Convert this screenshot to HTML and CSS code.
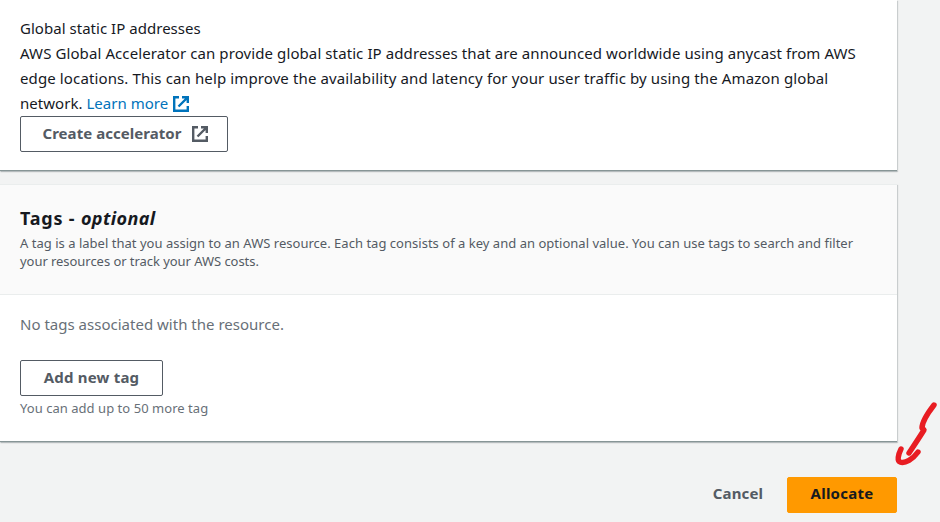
FILE: index.html
```
<!DOCTYPE html>
<html lang="en">
<head>
<meta charset="utf-8">
<title>Allocate Elastic IP address</title>
<link rel="stylesheet" href="styles.css">
</head>
<body>
<main class="page">
  <section class="card accelerator">
    <h3 class="label">Global static IP addresses</h3>
    <p class="copy">
      <span class="line line-a">AWS Global Accelerator can provide global static IP addresses that are announced worldwide using anycast from AWS</span>
      <span class="line line-b">edge locations. This can help improve the availability and latency for your user traffic by using the Amazon global</span>
      <span class="line line-c">network. <a class="link">Learn more<svg class="icon link-icon" viewBox="0 0 16 16"><path d="M6 1.200H1.200v13.600h13.600V10M9 1.200h5.800V7M14.500 1.500 5.500 10.500"/></svg></a></span>
    </p>
    <button class="button create"><span>Create accelerator</span><svg class="icon" viewBox="0 0 16 16"><path d="M6 1.200H1.200v13.600h13.600V10M9 1.200h5.800V7M14.500 1.500 5.500 10.500"/></svg></button>
  </section>
  <section class="card tags">
    <header class="tags-header">
      <h2 class="title"><span class="title-main">Tags - </span><i>optional</i></h2>
      <p class="description">
        <span class="line desc-a">A tag is a label that you assign to an AWS resource. Each tag consists of a key and an optional value. You can use tags to search and filter</span>
        <span class="line desc-b">your resources or track your AWS costs.</span>
      </p>
    </header>
    <div class="tags-body">
      <p class="empty">No tags associated with the resource.</p>
      <button class="button add">Add new tag</button>
      <p class="hint">You can add up to 50 more tag</p>
    </div>
  </section>
  <footer class="actions">
    <button class="button cancel">Cancel</button>
    <button class="button primary">Allocate</button>
  </footer>
</main>
<svg class="arrow" viewBox="0 0 50 72"><path d="M44 6C37 15 32 24 32 29L34 31C29 39 23 48 19 54M11 50C8 56 7 62 10 63C15 65 23 60 28 53"/></svg>
</body>
</html>
```

FILE: styles.css
```
* { box-sizing: border-box; }
body {
  margin: 0;
  height: 522px;
  overflow: hidden;
  background: #f2f3f3;
  color: #16191f;
  font: 15px/25px "Noto Sans", sans-serif;
}
h2, h3, p { margin: 0; font-weight: 400; }
.page { width: 897px; }
.card {
  background: #fff;
  box-shadow: 0 1px 1px 0 rgba(0, 28, 36, .12), 1px 1px 1px 0 rgba(0, 28, 36, .15);
  border-bottom: 1px solid #879596;
}
.accelerator { height: 171px; padding: 16px 20px 0; }
.label { font-size: 15px; letter-spacing: .03px; }
.line { display: block; white-space: nowrap; }
.line-a { letter-spacing: .095px; }
.line-b { letter-spacing: .12px; }
.line-c { letter-spacing: .03px; }
.link { color: #0073bb; }
.icon { width: 16px; height: 16px; fill: none; stroke: currentColor; stroke-width: 2.400; }
.link-icon { margin-left: 5px; vertical-align: -3px; }
.button {
  display: flex;
  align-items: center;
  justify-content: center;
  height: 36px;
  padding: 0 0 2px;
  border: 1px solid #545b64;
  border-radius: 2px;
  background: #fff;
  color: #545b64;
  font: 700 15px/22px "Noto Sans", sans-serif;
  white-space: nowrap;
}
.create { width: 208px; gap: 10px; padding-left: 2px; letter-spacing: .05px; }
.create .icon { margin-top: 2px; }
.tags { height: 258px; margin-top: 13px; border-top: 1px solid #eaeded; }
.tags-header {
  height: 110px;
  padding: 20px 20px 0;
  background: #fafafa;
  border-bottom: 1px solid #eaeded;
}
.title { height: 29px; font: 700 18px/26px "Noto Sans", sans-serif; white-space: pre; }
.title-main { letter-spacing: .8px; }
.title i { letter-spacing: .4px; }
.description { color: #545b64; font-size: 13px; line-height: 18px; }
.desc-a { letter-spacing: .02px; }
.desc-b { letter-spacing: -.05px; }
.tags-body { padding: 17px 20px 0; color: #687078; }
.empty { margin-bottom: 23px; letter-spacing: .01px; }
.add { width: 143px; letter-spacing: .2px; }
.hint { margin-top: 3px; font-size: 13px; line-height: 18px; letter-spacing: .04px; }
.actions { display: flex; justify-content: flex-end; padding-top: 35px; }
.actions .button { padding-bottom: 4px; }
.cancel { width: 98px; border-color: transparent; background: transparent; letter-spacing: .15px; }
.primary { width: 110px; border-color: #f90; background: #f90; color: #16191f; letter-spacing: .25px; }
.arrow {
  position: absolute;
  left: 890px;
  top: 399px;
  width: 50px;
  height: 72px;
  fill: none;
  stroke: #e81c22;
  stroke-width: 5.400;
  stroke-linecap: round;
  stroke-linejoin: round;
}
```
